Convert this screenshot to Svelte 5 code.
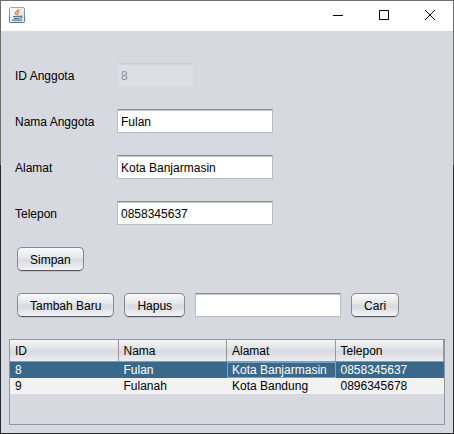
<script>
  let member = $state({ id: '8', name: 'Fulan', address: 'Kota Banjarmasin', phone: '0858345637' });
  let query = $state('');
  const columns = ['ID', 'Nama', 'Alamat', 'Telepon'];
  const rows = [
    ['8', 'Fulan', 'Kota Banjarmasin', '0858345637'],
    ['9', 'Fulanah', 'Kota Bandung', '0896345678']
  ];
</script>

<main class="window">
  <header class="titlebar">
    <svg class="logo" width="16" height="16" viewBox="0 0 16 16" aria-hidden="true">
      <defs>
        <linearGradient id="tile" x1="0" y1="0" x2="1" y2="1">
          <stop offset="0" stop-color="#ffffff" />
          <stop offset="1" stop-color="#cfdbe4" />
        </linearGradient>
        <linearGradient id="edge" x1="0" y1="0" x2="0" y2="1">
          <stop offset="0" stop-color="#93a9ba" />
          <stop offset="1" stop-color="#4f748f" />
        </linearGradient>
      </defs>
      <rect x="0.5" y="0.5" width="15" height="15" rx="1" fill="url(#tile)" stroke="url(#edge)" />
      <path d="M9.500 2C9.800 4 6.200 4.400 6.400 6.100C6.600 7.100 7.500 7.400 7.600 8.300M10.500 4.300C8.600 5 8.200 5.800 8.900 6.600C9.300 7.200 9 7.800 8.600 8.300" fill="none" stroke="#e87f2a" stroke-width="1.300" />
      <path d="M4 9.500H10.800M11 9.300C13.600 8.700 13.300 10.900 10.800 11.200M5 11.400H10.200M3.200 13.200H12.800" fill="none" stroke="#4a7896" stroke-width="1.200" />
    </svg>
    <div class="controls">
      <button aria-label="Minimize"><svg width="10" height="10" viewBox="0 0 10 10"><path d="M0 5.5H10" /></svg></button>
      <button aria-label="Maximize"><svg width="10" height="10" viewBox="0 0 10 10"><path d="M.5 .5H9.500V9.500H.5Z" /></svg></button>
      <button aria-label="Close"><svg width="10" height="10" viewBox="0 0 10 10"><path d="M0 0L10 10M10 0L0 10" /></svg></button>
    </div>
  </header>

  <div class="content">
    <form class="form" onsubmit={(e) => e.preventDefault()}>
      <div class="field">
        <label for="id">ID Anggota</label>
        <input id="id" class="short" type="text" bind:value={member.id} disabled />
      </div>
      <div class="field">
        <label for="name">Nama Anggota</label>
        <input id="name" type="text" bind:value={member.name} />
      </div>
      <div class="field">
        <label for="address">Alamat</label>
        <input id="address" type="text" bind:value={member.address} />
      </div>
      <div class="field">
        <label for="phone">Telepon</label>
        <input id="phone" type="text" bind:value={member.phone} />
      </div>
      <div class="actions"><button class="push">Simpan</button></div>
    </form>

    <div class="actions">
      <button class="push">Tambah Baru</button>
      <button class="push">Hapus</button>
      <input class="search" type="text" aria-label="Cari anggota" bind:value={query} />
      <button class="push">Cari</button>
    </div>

    <div class="scroll">
      <table>
        <thead>
          <tr>{#each columns as column}<th scope="col">{column}</th>{/each}</tr>
        </thead>
        <tbody>
          {#each rows as row, r}
            <tr class:selected={r === 0}>
              {#each row as cell, c}<td class:focused={r === 0 && c === 2}>{cell}</td>{/each}
            </tr>
          {/each}
        </tbody>
      </table>
    </div>
  </div>
</main>

<style>
  :global(body) {
    margin: 0;
    background: #d6d9e0;
  }
  .window {
    box-sizing: border-box;
    min-height: 100vh;
    display: flex;
    flex-direction: column;
    border: 1px solid transparent;
    background:
      linear-gradient(#d6d9e0, #d6d9e0) padding-box,
      linear-gradient(#6e6d6e 0 38%, #27282d 38%) border-box;
    color: #000;
    font: 12px/16px "Liberation Sans", Arial, sans-serif;
  }
  .titlebar {
    display: flex;
    justify-content: space-between;
    height: 30px;
    background: #fff;
  }
  .logo {
    margin: 6px 8px;
  }
  .controls {
    display: flex;
  }
  .controls button {
    width: 46px;
    height: 28px;
    padding: 0;
    border: 0;
    background: none;
    display: grid;
    place-items: center;
  }
  .controls path {
    fill: none;
    stroke: #000;
    stroke-width: 1;
  }
  .content {
    flex: 1;
    display: flex;
    flex-direction: column;
    gap: 22px;
    padding: 32px 8px 8px;
  }
  .form {
    display: flex;
    flex-direction: column;
    gap: 22px;
  }
  .field {
    display: flex;
    align-items: center;
    padding-left: 6px;
  }
  label {
    width: 102px;
    padding-top: 2px;
  }
  input {
    box-sizing: border-box;
    width: 156px;
    height: 24px;
    margin: 0;
    padding: 2px 3px 0;
    border: 1px solid #bcbcbf;
    border-top-color: #8d8e93;
    border-radius: 0;
    background: #fff;
    box-shadow: inset 0 1px 0 #c6c6c9;
    color: #000;
    font: inherit;
    outline: none;
  }
  input.short {
    width: 76px;
  }
  input:disabled {
    border-color: #d8dbe0;
    border-top-color: #c8cbd1;
    background: #dce0e4;
    box-shadow: inset 0 1px 0 #d3d6db;
    color: #8e8f99;
  }
  input.search {
    width: 146px;
  }
  .actions {
    display: flex;
    gap: 10px;
    padding-left: 8px;
  }
  .push {
    box-sizing: border-box;
    height: 24px;
    margin: 0;
    padding: 1px 12px 0;
    border: 1px solid #85888e;
    border-bottom-color: #54575c;
    border-radius: 5px;
    background: linear-gradient(#fafafb, #e6e8ec 40%, #d6d9df 55%, #f3f4f6);
    box-shadow: 0 1px 0 #bfc2c9;
    color: #000;
    font: inherit;
  }
  .scroll {
    flex: 1;
    border: 1px solid #9297a1;
  }
  table {
    width: 100%;
    table-layout: fixed;
    border-collapse: separate;
    border-spacing: 0;
  }
  th {
    box-sizing: border-box;
    height: 22px;
    padding: 1px 5px 0;
    border-right: 1px solid #9297a1;
    border-bottom: 1px solid #9297a1;
    background: linear-gradient(#f6f7f8, #dee0e5 45%, #d6d9df 55%, #eceef1);
    font-weight: normal;
    text-align: left;
  }
  td {
    box-sizing: border-box;
    height: 16px;
    padding: 1px 5px 0;
    background: #f2f2f2;
    line-height: 15px;
    white-space: nowrap;
  }
  .selected td {
    background: #39698a;
    color: #fff;
  }
  .selected td.focused {
    box-shadow: inset 0 0 0 1px #73a4d1;
  }
</style>
